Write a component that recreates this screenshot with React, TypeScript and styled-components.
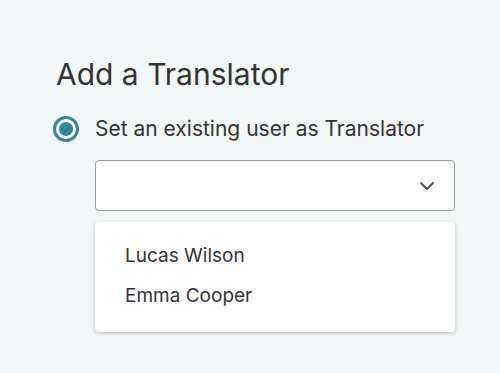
import React from 'react';
import styled, { createGlobalStyle } from 'styled-components';

const GlobalStyle = createGlobalStyle`
  html, body {
    margin: 0;
    padding: 0;
    background: #f3f6f7;
  }
  body {
    font-family: Inter, "Noto Sans", sans-serif;
    color: #333333;
  }
`;

const users = ['Lucas Wilson', 'Emma Cooper'];

const App = () => {
  return (
    <>
      <GlobalStyle />
      <Page>
        <Title>Add a Translator</Title>
        <RadioRow>
          <Radio />
          <RadioLabel>Set an existing user as Translator</RadioLabel>
        </RadioRow>
        <Field>
          <SelectBox>
            <Chevron width="16" height="10" viewBox="0 0 16 10">
              <path d="M2 2l6 6 6-6" fill="none" stroke="#555" strokeWidth="2" strokeLinecap="round" strokeLinejoin="round" />
            </Chevron>
          </SelectBox>
          <Menu>
            {users.map((u) => (
              <MenuItem key={u}>{u}</MenuItem>
            ))}
          </Menu>
        </Field>
      </Page>
    </>
  );
};

export default App;

const Page = styled.div`
  width: 500px;
  height: 373px;
  box-sizing: border-box;
  padding: 56px 45px 0 56px;
`;

const Title = styled.h2`
  margin: 0;
  font-size: 30px;
  font-weight: 400;
  line-height: 36px;
  color: #333;
`;

const RadioRow = styled.div`
  display: flex;
  align-items: center;
  gap: 16px;
  margin: 24px 0 0 -3px;
`;

const Radio = styled.span`
  width: 26px;
  height: 26px;
  box-sizing: border-box;
  border-radius: 50%;
  border: 3px solid #2f869f;
  background: #fff;
  display: flex;
  align-items: center;
  justify-content: center;
  &::after {
    content: '';
    width: 14px;
    height: 14px;
    border-radius: 50%;
    background: #2f869f;
  }
`;

const RadioLabel = styled.span`
  font-size: 21px;
  line-height: 26px;
  color: #333;
`;

const Field = styled.div`
  margin: 18px 0 0 39px;
  width: 360px;
`;

const SelectBox = styled.div`
  height: 51px;
  box-sizing: border-box;
  background: #fff;
  border: 1px solid #9a9a9a;
  border-radius: 4px;
  display: flex;
  align-items: center;
  justify-content: flex-end;
  padding-right: 19px;
`;

const Chevron = styled.svg`
  display: block;
`;

const Menu = styled.div`
  margin-top: 11px;
  background: #fff;
  border-radius: 4px;
  box-shadow: 0 1px 4px rgba(0, 0, 0, 0.22);
  padding: 14px 0 16px;
`;

const MenuItem = styled.div`
  padding: 0 30px;
  font-size: 19px;
  line-height: 40px;
  color: #333;
`;
